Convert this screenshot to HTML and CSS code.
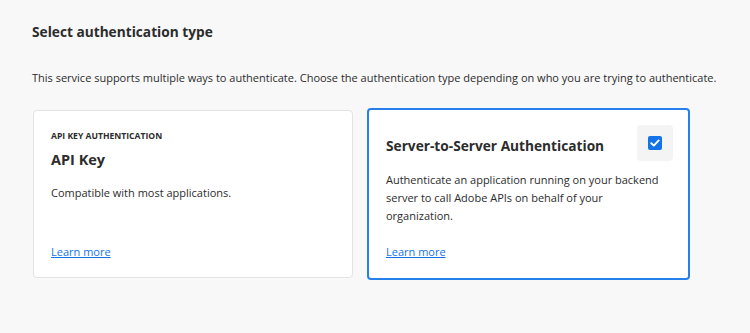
FILE: index.html
```html
<!DOCTYPE html>
<html lang="en">

<head>
    <meta charset="UTF-8">
    <meta name="viewport" content="width=device-width, initial-scale=1.0">
    <title>Select authentication type</title>
    <link rel="stylesheet" href="styles.css">
</head>

<body>
    <div class="page">
        <h2 class="title">Select authentication type</h2>
        <p class="intro">This service supports multiple ways to authenticate. Choose the authentication type depending on who you are trying to authenticate.</p>

        <div class="cards">
            <div class="card">
                <div class="card-top">
                    <div class="eyebrow">API KEY AUTHENTICATION</div>
                    <div class="card-title">API Key</div>
                    <p class="card-text">Compatible with most applications.</p>
                </div>
                <a href="#" class="learn">Learn more</a>
            </div>

            <div class="card selected">
                <div class="card-top">
                    <div class="card-head">
                        <div class="card-title big">Server-to-Server Authentication</div>
                        <div class="check-wrap">
                            <span class="check">
                                <svg width="10" height="8" viewBox="0 0 10 8">
                                    <path d="M1.3 4.2 L3.8 6.6 L8.7 1.4" fill="none" stroke="#fff" stroke-width="1.9" stroke-linecap="round" stroke-linejoin="round" />
                                </svg>
                            </span>
                        </div>
                    </div>
                    <p class="card-text">Authenticate an application running on your backend server to call Adobe APIs on behalf of your organization.</p>
                </div>
                <a href="#" class="learn">Learn more</a>
            </div>
        </div>
    </div>
</body>

</html>
```

FILE: styles.css
```css
body {
    margin: 0;
    background-color: #f8f8f8;
    font-family: "Open Sans", Arial, sans-serif;
    color: #2c2c2c;
}

.page {
    padding: 22px 32px 0 32px;
}

.title {
    margin: 0;
    font-size: 13.7px;
    font-weight: 700;
    line-height: 20px;
    color: #2c2c2c;
}

.intro {
    margin: 27px 0 0 0;
    font-size: 11px;
    line-height: 18px;
    white-space: nowrap;
}

.cards {
    display: flex;
    align-items: center;
    gap: 14px;
    margin-top: 21px;
    margin-left: 1px;
}

.card {
    box-sizing: border-box;
    width: 320px;
    height: 168px;
    background-color: #fff;
    border: 1px solid #e3e3e3;
    border-radius: 4px;
    padding: 18px 17px 16px 17px;
    display: flex;
    flex-direction: column;
    justify-content: space-between;
}

.card.selected {
    width: 323px;
    height: 172px;
    border: 2px solid #2680eb;
    padding: 15px 15px 17px 17px;
}

.eyebrow {
    font-size: 8.6px;
    font-weight: 700;
    line-height: 14px;
}

.card-title {
    font-size: 14.5px;
    font-weight: 700;
    line-height: 22px;
    margin-top: 6px;
}

.card-title.big {
    font-size: 13.7px;
    line-height: 20px;
    margin-top: 11px;
}

.card-head {
    display: flex;
    justify-content: space-between;
    align-items: flex-start;
}

.check-wrap {
    width: 36px;
    height: 36px;
    border-radius: 4px;
    background-color: #f4f4f4;
    display: flex;
    align-items: center;
    justify-content: center;
}

.check {
    width: 14px;
    height: 14px;
    border-radius: 2px;
    background-color: #1473e6;
    display: flex;
    align-items: center;
    justify-content: center;
}

.card-text {
    margin: 13px 0 0 0;
    font-size: 11px;
    line-height: 18px;
}

.selected .card-text {
    margin-top: 10px;
    max-width: 285px;
}

.learn {
    font-size: 11px;
    line-height: 18px;
    color: #1473e6;
    text-decoration: underline;
}
```
